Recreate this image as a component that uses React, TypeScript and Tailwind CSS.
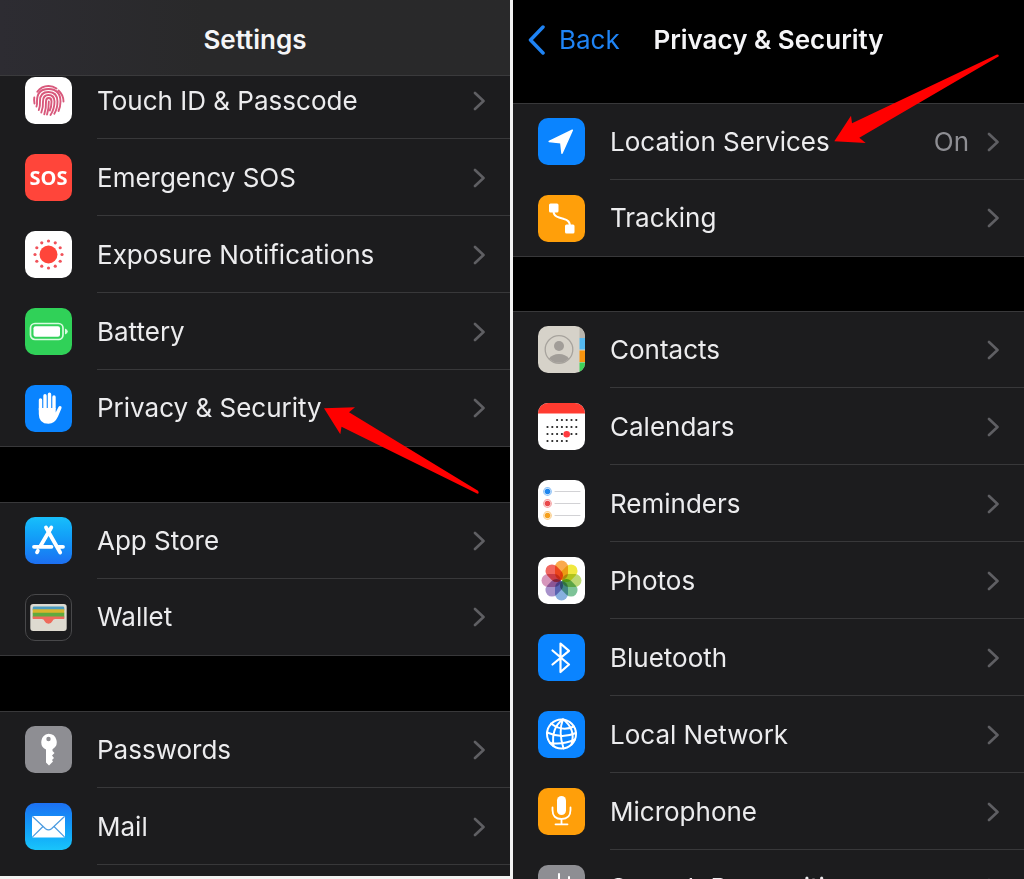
import type { ReactNode } from 'react'

type Item = { name: string; icon: ReactNode; value?: string; extra?: ReactNode }

function Tile({ className = '', children }: { className?: string; children: ReactNode }) {
  return (
    <span className={`relative flex size-[47px] shrink-0 items-center justify-center overflow-hidden rounded-[10px] ${className}`}>
      {children}
    </span>
  )
}

function Art({ children }: { children: ReactNode }) {
  return (
    <svg viewBox="0 0 47 47" className="size-full" fill="none" stroke="none" strokeLinecap="round" strokeLinejoin="round" aria-hidden="true">
      {children}
    </svg>
  )
}

function ChevronRight() {
  return (
    <svg viewBox="0 0 12 20" className="h-5 w-3 shrink-0" fill="none" stroke="#5f5f63" strokeWidth="2.6" strokeLinecap="round" strokeLinejoin="round" aria-hidden="true">
      <path d="M2 2l8.5 8L2 18" />
    </svg>
  )
}

const dots = Array.from({ length: 12 }, (_, i) => {
  const a = (i * Math.PI) / 6
  return { x: 23.5 + 13.5 * Math.cos(a), y: 23.5 + 13.5 * Math.sin(a) }
})

const petals = ['#f9a13a', '#eee62a', '#b5d465', '#6fbd8c', '#7aa7dc', '#9d85c4', '#d28bb4', '#f0564f']

// day dots of the calendar: [y, first column, last column]
const weeks = [[17, 2, 6], [24, 0, 6], [31, 0, 6], [38, 0, 4]]

const leftArrow = (
  <svg viewBox="0 0 155 88" className="pointer-events-none absolute top-[37px] right-[31px] z-20 h-[88px] w-[155px]" aria-hidden="true">
    <path d="M0 1.3L31 .3L25 5.3L154 83.8Q155.5 86.5 153.5 86.8L17.5 19.7L16.3 27.3Z" fill="#ff0000" />
  </svg>
)

const rightArrow = (
  <svg viewBox="0 0 165 90" className="pointer-events-none absolute -top-[49px] right-[25px] z-20 h-[90px] w-[165px]" aria-hidden="true">
    <path d="M.3 87.3L17 61.7L18 69.3L163 .5Q165.500 .5 164.500 2.500L25.3 83.7L31.7 89Z" fill="#ff0000" />
  </svg>
)

const settings: Item[][] = [
  [
    {
      name: 'Touch ID & Passcode',
      icon: (
        <Tile className="bg-white">
          <Art>
            <g stroke="#d8587b" strokeWidth="1.9">
              <path d="M12.3 14.8Q16.5 9 23.5 9Q28 9 31.500 11.500" />
              <path d="M33.500 13.500Q38.500 18 38.500 24.500" />
              <path d="M9.300 20.500Q8.800 23 9.500 26.500" />
              <path d="M11.500 29.500Q12.300 27.500 12 24Q12 12 23.500 12Q35.300 12 35.500 24.500Q35.500 29.500 33.500 34" />
              <path d="M13.800 33Q15.300 29 15 24Q15 15 23.500 15Q32.300 15 32.500 24.500Q32.500 31.500 29.300 36.800" />
              <path d="M16.300 35.500Q18.300 30.500 18 24.500Q18 18 23.500 18Q29.300 18 29.500 24.500Q29.500 32 25.500 38" />
              <path d="M19.300 37.300Q21.300 31 21 24.500Q21 21 23.700 21Q26.500 21 26.500 24.500Q26.500 30 24.800 33.500" />
              <path d="M23.800 24.500Q23.900 32 22 37.500" />
            </g>
          </Art>
        </Tile>
      ),
    },
    {
      name: 'Emergency SOS',
      icon: <Tile className="bg-[#ff453a]"><span className="font-['Open_Sans','Roboto',sans-serif] text-[20px] font-bold text-white">SOS</span></Tile>,
    },
    {
      name: 'Exposure Notifications',
      icon: (
        <Tile className="bg-white">
          <Art>
            <circle cx="23.5" cy="23.5" r="9" fill="#ff453a" />
            {dots.map((d, i) => <circle key={i} cx={d.x} cy={d.y} r="1.6" fill="#f0525a" />)}
          </Art>
        </Tile>
      ),
    },
    {
      name: 'Battery',
      icon: (
        <Tile className="bg-[#30d158]">
          <Art>
            <rect x="5.5" y="15.5" width="32.5" height="16" rx="4.5" stroke="#d8fbe0" strokeWidth="1.7" />
            <rect x="8.5" y="18.3" width="26.5" height="10.5" rx="2" fill="#fff" />
            <path d="M40 20.500q2.800 1 2.800 3t-2.800 3z" fill="#d8fbe0" />
          </Art>
        </Tile>
      ),
    },
    {
      name: 'Privacy & Security',
      icon: (
        <Tile className="bg-[#0a84ff]">
          <Art>
            <path d="M15.500 25V15M20 23V10.800M24.500 23V9.300M29 23V12" stroke="#fff" strokeWidth="3.4" />
            <path d="M13.800 23H30.700V27.500L33.200 22.500Q34.500 20.300 36.300 21.500Q36.900 22.200 36.300 23.700L33 31.500Q29.700 38.800 23.500 38.800Q13.800 38.800 13.800 29Z" fill="#fff" />
          </Art>
        </Tile>
      ),
      extra: leftArrow,
    },
  ],
  [
    {
      name: 'App Store',
      icon: (
        <Tile className="bg-linear-to-b from-[#18bffb] to-[#1d6ff2]">
          <Art>
            <path d="M21 10.500L35.200 35.500M26.300 10.500L15.200 29.500M12.800 33.800L12 35.300M9 29.800H26.500M32.800 29.800H38" stroke="#fff" strokeWidth="3.8" />
          </Art>
        </Tile>
      ),
    },
    {
      name: 'Wallet',
      icon: (
        <Tile className="border border-[#48484a] bg-[#1c1c1e]">
          <Art>
            <rect x="4.5" y="9.5" width="38" height="28" rx="3" fill="#dedad0" />
            <path d="M7 13.500q0-1.500 1.500-1.500h30q1.500 0 1.500 1.500v2.500H7z" fill="#4b9bbd" />
            <path d="M7 15h33v4H7z" fill="#d9b52d" />
            <path d="M7 18.500h33v5H7z" fill="#60aa3e" />
            <path d="M7 22.500h33v2.500H30.500q-2 0-3 2.500t-4 2.500t-4-2.500t-3-2.500H7z" fill="#ee6a5c" />
          </Art>
        </Tile>
      ),
    },
  ],
  [
    {
      name: 'Passwords',
      icon: (
        <Tile className="bg-[#8e8e93]">
          <Art>
            <path fillRule="evenodd" d="M23.500 7.800a8.300 8.300 0 0 1 4 15.500V25l2 2-2.500 2.500L29 32l-2 2 1 1.500-4 4-3-3V23.500A8.300 8.300 0 0 1 23.500 7.800zM23.500 10.800a2.200 2.200 0 1 0 0 4.400a2.200 2.200 0 1 0 0-4.400z" fill="#fff" />
          </Art>
        </Tile>
      ),
    },
    {
      name: 'Mail',
      icon: (
        <Tile className="bg-linear-to-b from-[#1d70f3] to-[#1ac4fa]">
          <Art>
            <rect x="7" y="13" width="33" height="21.5" rx="1.5" fill="#fff" />
            <path d="M7.800 13.800L20.500 25.700q3 2.500 6 0L39.200 13.800M7.800 33.700L18 23.500M39.200 33.700L29 23.500" stroke="#4b9be0" strokeWidth="1.2" />
          </Art>
        </Tile>
      ),
    },
  ],
]

const privacy: Item[][] = [
  [
    {
      name: 'Location Services',
      value: 'On',
      icon: (
        <Tile className="bg-[#0a84ff]">
          <Art>
            <path d="M34.300 12.200L24 35.300L22.800 24.700L11.200 23.500Z" fill="#fff" stroke="#fff" strokeWidth="1.5" />
          </Art>
        </Tile>
      ),
      extra: rightArrow,
    },
    {
      name: 'Tracking',
      icon: (
        <Tile className="bg-[#ff9f0a]">
          <Art>
            <rect x="11" y="8.5" width="9.5" height="9" rx="1.5" fill="#fff" />
            <rect x="27" y="29.5" width="9.5" height="9" rx="1.5" fill="#fff" />
            <path d="M15.500 16q0 5 5.500 6.500l5 1.500q6 1.500 6 7" stroke="#fff" strokeWidth="2" />
          </Art>
        </Tile>
      ),
    },
  ],
  [
    {
      name: 'Contacts',
      icon: (
        <Tile className="bg-[#d6d2c9]">
          <Art>
            <path d="M41.500 0H47V12H41.500z" fill="#b9b5ad" />
            <path d="M41.500 12H47V23.500H41.500z" fill="#55b9f0" />
            <path d="M41.500 24.500H47V36H41.500z" fill="#f7940f" />
            <path d="M41.500 36.500H47V47H41.500z" fill="#3ed158" />
            <circle cx="21" cy="23.5" r="13.8" stroke="#a7a39d" strokeWidth="1.3" />
            <circle cx="21" cy="20" r="5" fill="#a19d98" />
            <path d="M11 32.500q3.500-4.500 10-4.500t10 4.500q-4.300 4.200-10 4.200t-10-4.200z" fill="#a19d98" />
          </Art>
        </Tile>
      ),
    },
    {
      name: 'Calendars',
      icon: (
        <Tile className="bg-white">
          <Art>
            <path d="M0 0H47V10.500H0z" fill="#ff3b30" />
            {weeks.map(([y, from, to]) =>
              Array.from({ length: to - from + 1 }, (_, i) => (
                <circle key={`${y}-${i}`} cx={9.5 + (from + i) * 4.8} cy={y} r="1.1" fill="#222" />
              )),
            )}
            <circle cx="28.7" cy="31.3" r="3.3" fill="#ff3b40" />
          </Art>
        </Tile>
      ),
    },
    {
      name: 'Reminders',
      icon: (
        <Tile className="bg-white">
          <Art>
            {['#1f86ee', '#e9484a', '#f5a01d'].map((c, i) => (
              <g key={c}>
                <circle cx="9.5" cy={11.5 + i * 12} r="3.8" stroke={c} strokeOpacity="0.5" strokeWidth="1.2" />
                <circle cx="9.5" cy={11.5 + i * 12} r="2.8" fill={c} />
                <path d={`M17 ${11.5 + i * 12}H42`} stroke="#d2d2d5" />
              </g>
            ))}
          </Art>
        </Tile>
      ),
    },
    {
      name: 'Photos',
      icon: (
        <Tile className="bg-white">
          <Art>
            {petals.map((c, i) => (
              <rect key={c} x="17" y="3.5" width="13" height="19.5" rx="6.500" fill={c} fillOpacity="0.9" className="mix-blend-multiply" transform={`rotate(${i * 45} 23.5 23.5)`} />
            ))}
          </Art>
        </Tile>
      ),
    },
    {
      name: 'Bluetooth',
      icon: (
        <Tile className="bg-[#0a84ff]">
          <Art>
            <path d="M14.500 16.500L31 30.500L22.500 38V9.500L31 16.800L14.500 30.500" stroke="#fff" strokeWidth="2.2" />
          </Art>
        </Tile>
      ),
    },
    {
      name: 'Local Network',
      icon: (
        <Tile className="bg-[#0a84ff]">
          <Art>
            <g stroke="#fff" strokeWidth="2">
              <circle cx="23.5" cy="23" r="14.5" />
              <path d="M25 8.300Q13 17 15.500 35M25 8.300Q20 20 25.500 37.500M25 8.300Q38 18 33.500 33.500" />
              <path d="M13 12.500Q24 21 36 15.500M9 21.500Q24 28 38 22M12 32Q25 34 37 28.500" />
            </g>
          </Art>
        </Tile>
      ),
    },
    {
      name: 'Microphone',
      icon: (
        <Tile className="bg-[#ff9f0a]">
          <Art>
            <rect x="19" y="8" width="9" height="19" rx="4.5" fill="#fff" />
            <path d="M14.500 19.500v2.500q0 9 9 9t9-9v-2.500M23.500 31v5.300M17.500 36.300h12" stroke="#fff" strokeWidth="1.8" />
          </Art>
        </Tile>
      ),
    },
    {
      name: 'Speech Recognition',
      icon: (
        <Tile className="bg-[#8e8e93]">
          <Art>
            <path d="M11 20v7M16 16v15M21 9v29M26 17v13M31 12v23M36 20v7" stroke="#fff" strokeWidth="2" />
          </Art>
        </Tile>
      ),
    },
  ],
]

// open: the group runs on below the fold, so its last row keeps the inset divider
function Group({ items, open = false }: { items: Item[]; open?: boolean }) {
  return (
    <ul className={`bg-[#1c1c1e] shadow-[inset_0_1px_0_#38383a] ${open ? 'pb-8' : 'border-b border-[#38383a]'}`}>
      {items.map((item, i) => {
        const closing = !open && i === items.length - 1
        return (
          <li key={item.name} className="relative">
            <a href="#" className={`flex items-center gap-[25px] pl-[25px] ${closing ? 'h-[76px]' : 'h-[77px]'}`}>
              {item.icon}
              <span className={`flex h-full min-w-0 flex-1 items-center gap-[18px] pr-[25px] ${closing ? '' : 'shadow-[inset_0_-1px_0_#38383a]'}`}>
                <span className="flex-1 whitespace-nowrap text-[#ececee]">{item.name}</span>
                {item.value && <span className="text-[#8e8e93]">{item.value}</span>}
                <ChevronRight />
              </span>
            </a>
            {item.extra}
          </li>
        )
      })}
    </ul>
  )
}

export default function App() {
  return (
    <div className="grid h-screen grid-cols-[510fr_511fr] gap-[3px] overflow-hidden bg-[#f2f2f2] font-['Inter','Liberation_Sans',sans-serif] text-[26px] leading-8">
      <section className="mb-[3px] overflow-hidden bg-black">
        <header className="relative z-10 flex h-[76px] items-center justify-center border-b border-[#3a3a3c] bg-linear-to-r from-[#2d2c32] to-[#29292a] to-40% pt-1">
          <h1 className="font-semibold text-[#f5f5f7]">Settings</h1>
        </header>
        <div className="-mt-[14px] flex flex-col gap-[55px]">
          {settings.map((items, i) => <Group key={i} items={items} open={i === settings.length - 1} />)}
        </div>
      </section>

      <section className="overflow-hidden bg-black">
        <header className="relative flex h-[103px] items-start justify-center pt-6">
          <button type="button" className="absolute left-[15px] flex items-center gap-3.5 text-[#1f84f5]">
            <svg viewBox="0 0 17 30" className="h-[30px] w-[17px]" fill="none" stroke="currentColor" strokeWidth="3.5" strokeLinecap="round" strokeLinejoin="round" aria-hidden="true">
              <path d="M15 2L2.500 15L15 28" />
            </svg>
            Back
          </button>
          <h1 className="font-semibold text-[#f5f5f7]">Privacy & Security</h1>
        </header>
        <div className="flex flex-col gap-[54px]">
          {privacy.map((items, i) => <Group key={i} items={items} />)}
        </div>
      </section>
    </div>
  )
}
